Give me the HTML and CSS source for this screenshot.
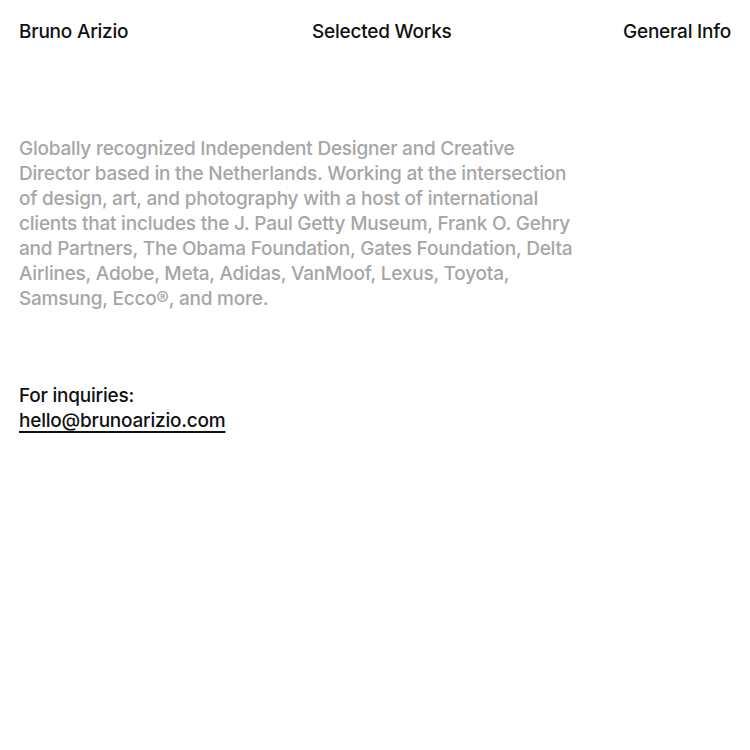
FILE: index.html
```html
<!DOCTYPE html>
<html lang="en">
<head>
<meta charset="utf-8">
<title>Bruno Arizio</title>
<link rel="stylesheet" href="styles.css">
</head>
<body>
<header class="nav">
  <a class="nav-link" href="#">Bruno Arizio</a>
  <a class="nav-link" href="#">Selected Works</a>
  <a class="nav-link nav-right" href="#">General Info</a>
</header>
<main class="content">
  <p class="bio">Globally recognized Independent Designer and Creative Director based in the Netherlands. Working at the intersection of design, art, and photography with a host of international clients that includes the J. Paul Getty Museum, Frank O. Gehry and Partners, The Obama Foundation, Gates Foundation, Delta Airlines, Adobe, Meta, Adidas, VanMoof, Lexus, Toyota, Samsung, Ecco®, and more.</p>
  <div class="contact">
    <p class="contact-label">For inquiries:</p>
    <a class="contact-mail" href="#">hello@brunoarizio.com</a>
  </div>
</main>
</body>
</html>
```
FILE: styles.css
```css
html, body {
  margin: 0;
  padding: 0;
  background: #ffffff;
}
body {
  font-family: Inter, "Liberation Sans", sans-serif;
  font-weight: 500;
  font-size: 19px;
  line-height: 25px;
  letter-spacing: -0.22px;
  color: #111111;
  padding: 0 19px;
}
.nav {
  display: grid;
  grid-template-columns: 293px 1fr auto;
  padding-top: 19px;
}
.nav-link {
  color: #111111;
  text-decoration: none;
}
.content {
  padding-top: 92px;
}
.bio {
  margin: 0;
  max-width: 562px;
  color: #a6a6a6;
}
.contact {
  margin-top: 72px;
}
.contact-label {
  margin: 0;
}
.contact-mail {
  color: #111111;
  text-decoration: underline;
  text-underline-offset: 4px;
  text-decoration-thickness: 2px;
  text-decoration-skip-ink: none;
}
```
